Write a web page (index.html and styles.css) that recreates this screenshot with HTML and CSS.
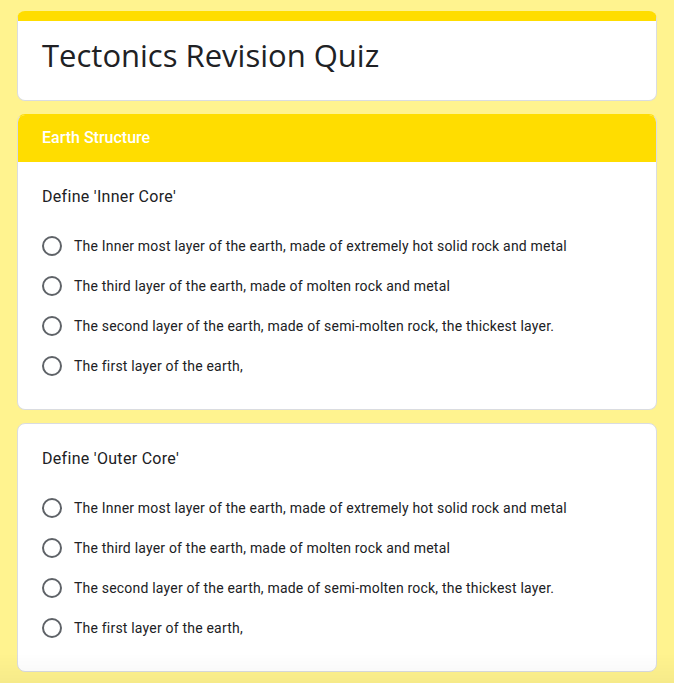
FILE: index.html
```html
<!DOCTYPE html>
<html lang="en">
<head>
<meta charset="utf-8">
<title>Tectonics Revision Quiz</title>
<link rel="stylesheet" href="styles.css">
</head>
<body>
<main class="form">
  <section class="card title-card">
    <h1 class="form-title">Tectonics Revision Quiz</h1>
  </section>

  <section class="card section-card">
    <div class="section-header">Earth Structure</div>
    <div class="question">
      <div class="q-title">Define 'Inner Core'</div>
      <div class="options">
        <label class="option"><span class="radio"></span><span class="opt-text">The Inner most layer of the earth, made of extremely hot solid rock and metal</span></label>
        <label class="option"><span class="radio"></span><span class="opt-text">The third layer of the earth, made of molten rock and metal</span></label>
        <label class="option"><span class="radio"></span><span class="opt-text">The second layer of the earth, made of semi-molten rock, the thickest layer.</span></label>
        <label class="option"><span class="radio"></span><span class="opt-text">The first layer of the earth,</span></label>
      </div>
    </div>
  </section>

  <section class="card">
    <div class="question">
      <div class="q-title">Define 'Outer Core'</div>
      <div class="options">
        <label class="option"><span class="radio"></span><span class="opt-text">The Inner most layer of the earth, made of extremely hot solid rock and metal</span></label>
        <label class="option"><span class="radio"></span><span class="opt-text">The third layer of the earth, made of molten rock and metal</span></label>
        <label class="option"><span class="radio"></span><span class="opt-text">The second layer of the earth, made of semi-molten rock, the thickest layer.</span></label>
        <label class="option"><span class="radio"></span><span class="opt-text">The first layer of the earth,</span></label>
      </div>
    </div>
  </section>
</main>
<div class="bottom-fade"></div>
</body>
</html>
```

FILE: styles.css
```css
html, body {
  margin: 0;
  padding: 0;
}
body {
  background: #fff38f;
  font-family: Roboto, "Liberation Sans", Arial, sans-serif;
  color: #202124;
  min-height: 683px;
}
.form {
  width: 640px;
  margin: 0 0 0 17px;
  padding-top: 11px;
  display: flex;
  flex-direction: column;
  gap: 13px;
}
.card {
  background: #fff;
  border: 1px solid #dadce0;
  border-radius: 8px;
  overflow: hidden;
}
.title-card {
  border-top: 10px solid #ffdd00;
  border-color: #ffdd00 #dadce0 #dadce0 #dadce0;
  padding: 14px 24px 25px;
}
.form-title {
  margin: 0;
  font-family: "Open Sans", Roboto, sans-serif;
  font-weight: 400;
  font-size: 31px;
  line-height: 40px;
  color: #202124;
}
.section-card {
  border-color: #ffdd00 #dadce0 #dadce0 #dadce0;
}
.section-header {
  background: #ffdd00;
  color: #fff;
  font-family: Roboto, sans-serif;
  font-size: 16px;
  font-weight: 500;
  height: 47px;
  line-height: 46px;
  padding: 0 24px;
}
.question {
  padding: 23px 24px 23px;
}
.q-title {
  font-family: Roboto, sans-serif;
  font-size: 16px;
  letter-spacing: 0.3px;
  line-height: 24px;
  color: #202124;
  margin-bottom: 17px;
}
.options {
  display: flex;
  flex-direction: column;
}
.option {
  display: flex;
  align-items: center;
  height: 40px;
}
.radio {
  box-sizing: border-box;
  width: 20px;
  height: 20px;
  border: 2px solid #5f6368;
  border-radius: 50%;
  flex: none;
  margin-right: 12px;
}
.opt-text {
  font-size: 14px;
  letter-spacing: 0.2px;
  color: #202124;
}
.bottom-fade {
  position: fixed;
  left: 0;
  right: 0;
  bottom: 0;
  height: 30px;
  background: linear-gradient(to bottom, rgba(0,0,0,0), rgba(0,0,0,0.035));
  pointer-events: none;
}
```
